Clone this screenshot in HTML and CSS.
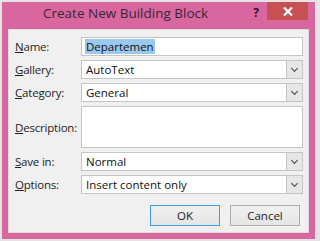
FILE: index.html
```html
<!DOCTYPE html>
<html lang="en">
<head>
    <meta charset="UTF-8">
    <title>Create New Building Block</title>
    <link rel="stylesheet" href="styles.css">
</head>
<body>
    <div class="window">
        <div class="title-bar">
            <span class="title">Create New Building Block</span>
            <span class="help">?</span>
            <span class="close">
                <svg width="10" height="9" viewBox="0 0 10 9">
                    <path d="M1 0.5 L9 8.5 M9 0.5 L1 8.5" stroke="#fff" stroke-width="2.2"/>
                </svg>
            </span>
        </div>

        <div class="client">
            <form class="fields">
                <label><u>N</u>ame:</label>
                <div class="box"><span class="selected">Departemen</span></div>

                <label><u>G</u>allery:</label>
                <div class="box combo">AutoText<span class="drop"></span></div>

                <label><u>C</u>ategory:</label>
                <div class="box combo">General<span class="drop"></span></div>

                <label><u>D</u>escription:</label>
                <div class="box tall"></div>

                <label><u>S</u>ave in:</label>
                <div class="box combo">Normal<span class="drop"></span></div>

                <label><u>O</u>ptions:</label>
                <div class="box combo">Insert content only<span class="drop"></span></div>
            </form>

            <div class="buttons">
                <button class="btn default">OK</button>
                <button class="btn">Cancel</button>
            </div>
        </div>
    </div>
</body>
</html>
```

FILE: styles.css
```css
* {
    margin: 0;
    padding: 0;
    box-sizing: border-box;
}

body {
    background: #e4e4e4;
    padding: 2px 5px 2px 2px;
    font-family: 'Open Sans', 'Noto Sans', sans-serif;
}

.window {
    width: 313px;
    height: 237px;
    background: #d8679f;
    padding: 0 6px 6px 6px;
    display: flex;
    flex-direction: column;
}

.title-bar {
    height: 27px;
    display: flex;
    align-items: flex-start;
}

.title {
    margin: 2px 0 0 35px;
    font-size: 13.5px;
    color: #3b2438;
    white-space: nowrap;
}

.help {
    margin: 2px 0 0 auto;
    font-size: 12px;
    font-weight: 700;
    color: #2a1a28;
}

.close {
    width: 41px;
    height: 18px;
    margin-left: 8px;
    margin-right: 1px;
    background: #c75050;
    display: flex;
    align-items: center;
    justify-content: center;
}

.client {
    flex: 1;
    background: #f0f0f0;
    border: 1px solid #dcdcdc;
    padding: 7px 4px 0 6px;
}

.fields {
    display: grid;
    grid-template-columns: 66px 222px;
    row-gap: 4px;
    font-size: 11.5px;
    color: #1e1e1e;
}

.fields label {
    display: flex;
    align-items: center;
    letter-spacing: -0.2px;
}

.box {
    height: 19px;
    background: #fff;
    border: 1px solid #c4c4c4;
    display: flex;
    align-items: center;
    padding-left: 4px;
    font-size: 11.5px;
    color: #111;
    position: relative;
}

.box.tall {
    height: 42px;
}

.selected {
    background: #99c9ef;
    padding: 0 1px;
    margin-left: -1px;
}

.drop {
    position: absolute;
    right: 0;
    top: 0;
    bottom: 0;
    width: 16px;
    background: #e6e6e6;
    border-left: 1px solid #c4c4c4;
}

.drop::after {
    content: "";
    position: absolute;
    left: 5px;
    top: 5px;
    width: 4px;
    height: 4px;
    border-right: 1.5px solid #444;
    border-bottom: 1.5px solid #444;
    transform: rotate(45deg);
}

.buttons {
    display: flex;
    justify-content: flex-end;
    gap: 10px;
    margin-top: 11px;
    padding-right: 4px;
}

.btn {
    width: 70px;
    height: 21px;
    font-family: inherit;
    font-size: 11.5px;
    color: #1e1e1e;
    background: linear-gradient(#f0f0f0, #e5e5e5);
    border: 1px solid #adadad;
}

.btn.default {
    border-color: #3c9ee8;
}
```
